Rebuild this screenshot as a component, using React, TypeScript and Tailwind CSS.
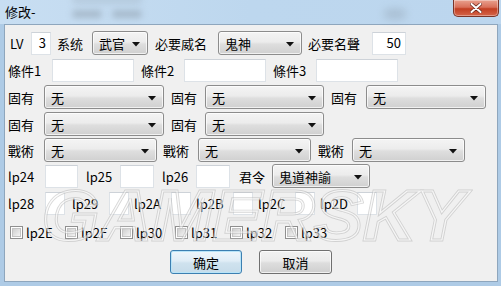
import React from "react";

const FONT = "font-['Noto_Sans_CJK_SC','Noto_Sans',sans-serif]";

function Label({ cls, children }: { cls: string; children: React.ReactNode }) {
  return <div className={`shrink-0 whitespace-nowrap leading-none ${cls}`}>{children}</div>;
}

function Input({ cls, value }: { cls: string; value?: string }) {
  return (
    <div
      className={`shrink-0 h-[23px] bg-white border border-[#dde2e7] border-t-[#cdd2d8] flex items-center justify-end pr-[4px] ${cls}`}
    >
      {value}
    </div>
  );
}

function Combo({ cls, text }: { cls: string; text: string }) {
  return (
    <div
      className={`shrink-0 relative h-[24px] rounded-[3px] border border-[#8c8c8c] bg-[linear-gradient(#f4f4f4,#ececec_45%,#dedede_55%,#d0d0d0)] shadow-[inset_0_0_0_1px_rgba(255,255,255,0.7)] flex items-center pl-[6px] ${cls}`}
    >
      <span className="leading-none">{text}</span>
      <svg className="absolute right-[7px] top-[10px]" width="8" height="5" viewBox="0 0 8 5">
        <path d="M0 0 H8 L4 4.5 Z" fill="#111" />
      </svg>
    </div>
  );
}

function Check({ label }: { label: string }) {
  return (
    <div className="shrink-0 w-[55px] flex items-center">
      <div className="w-[13px] h-[13px] border border-[#8f8f8f] bg-white p-[1px]">
        <div className="w-full h-full bg-[linear-gradient(135deg,#cfcfcf,#f4f4f4)] border border-[#c4c4c4]" />
      </div>
      <span className="ml-[3px] leading-none">{label}</span>
    </div>
  );
}

export default function App() {
  return (
    <div className={`relative w-[501px] h-[286px] overflow-hidden bg-[#aecbe6] text-[13px] text-black ${FONT}`}>
      {/* title bar */}
      <div className="relative h-[24px] flex items-start bg-[linear-gradient(90deg,#c8def2,#bdd7ee_50%,#bcd6ee)]">
        <div className="absolute left-[72px] top-[10px] w-[30px] h-[8px] rounded-full bg-[#8b9aa8] opacity-50 blur-[3px]" />
        <div className="absolute left-[112px] top-[10px] w-[30px] h-[8px] rounded-full bg-[#8b9aa8] opacity-50 blur-[3px]" />
        <div className="absolute left-[72px] top-[-4px] w-[70px] h-[8px] rounded-full bg-[#9fb0c0] opacity-40 blur-[3px]" />
        <div className="absolute left-[384px] top-[9px] w-[22px] h-[10px] rounded-full bg-[#8b9aa8] opacity-40 blur-[4px]" />
        <div className="relative ml-[5px] mt-[5px] leading-none text-[13px]">修改-</div>
        <div className="relative ml-auto mr-[2px] w-[46px] h-[17px] rounded-b-[5px] border border-t-0 border-[#7a3428] bg-[linear-gradient(#e9a18f,#d9705a_45%,#c23e22_55%,#d4654a)] flex items-center justify-center shadow-[inset_0_0_0_1px_rgba(255,255,255,0.35)]">
          <svg width="12" height="10" viewBox="0 0 12 10">
            <path d="M1 0.5 L11 9.5 M11 0.5 L1 9.5" stroke="#6b2a20" strokeWidth="3.4" strokeLinecap="round" />
            <path d="M1.5 1 L10.5 9 M10.5 1 L1.5 9" stroke="#ffffff" strokeWidth="2" strokeLinecap="round" />
          </svg>
        </div>
      </div>

      {/* content */}
      <div className="ml-[4px] w-[494px] h-[258px] bg-[#f0f0f0] border border-[#8ea6bd] flex flex-col">
        {/* row 1 */}
        <div className="mt-[6px] h-[24px] flex items-center">
          <Label cls="ml-[5px] w-[21px]">LV</Label>
          <Input cls="w-[20px]" value="3" />
          <Label cls="ml-[6px] w-[35px]">系统</Label>
          <Combo cls="w-[56px]" text="武官" />
          <Label cls="ml-[7px] w-[63px]">必要威名</Label>
          <Combo cls="w-[84px]" text="鬼神" />
          <Label cls="ml-[6px] w-[64px]">必要名聲</Label>
          <Input cls="w-[34px]" value="50" />
        </div>
        {/* row 2 */}
        <div className="mt-[3px] h-[24px] flex items-center">
          <Label cls="ml-[3px] w-[44px]">條件1</Label>
          <Input cls="w-[82px]" />
          <Label cls="ml-[7px] w-[43px]">條件2</Label>
          <Input cls="w-[82px]" />
          <Label cls="ml-[7px] w-[43px]">條件3</Label>
          <Input cls="w-[82px]" />
        </div>
        {/* row 3 */}
        <div className="mt-[3px] h-[24px] flex items-center">
          <Label cls="ml-[3px] w-[36px]">固有</Label>
          <Combo cls="w-[120px]" text="无" />
          <Label cls="ml-[7px] w-[34px]">固有</Label>
          <Combo cls="w-[119px]" text="无" />
          <Label cls="ml-[7px] w-[35px]">固有</Label>
          <Combo cls="w-[120px]" text="无" />
        </div>
        {/* row 4 */}
        <div className="mt-[3px] h-[24px] flex items-center">
          <Label cls="ml-[3px] w-[36px]">固有</Label>
          <Combo cls="w-[120px]" text="无" />
          <Label cls="ml-[7px] w-[34px]">固有</Label>
          <Combo cls="w-[119px]" text="无" />
        </div>
        {/* row 5 */}
        <div className="mt-[2px] h-[24px] flex items-center">
          <Label cls="ml-[3px] w-[36px]">戰術</Label>
          <Combo cls="w-[113px]" text="无" />
          <Label cls="ml-[6px] w-[35px]">戰術</Label>
          <Combo cls="w-[113px]" text="无" />
          <Label cls="ml-[7px] w-[34px]">戰術</Label>
          <Combo cls="w-[113px]" text="无" />
        </div>
        {/* row 6 */}
        <div className="mt-[2px] h-[24px] flex items-center">
          <Label cls="ml-[3px] w-[37px]">lp24</Label>
          <Input cls="w-[33px]" />
          <Label cls="ml-[8px] w-[34px]">lp25</Label>
          <Input cls="w-[34px]" />
          <Label cls="ml-[8px] w-[34px]">lp26</Label>
          <Input cls="w-[34px]" />
          <Label cls="ml-[9px] w-[33px]">君令</Label>
          <Combo cls="w-[98px]" text="鬼道神諭" />
        </div>
        {/* row 7 */}
        <div className="mt-[3px] h-[24px] flex items-center">
          <Label cls="ml-[3px] w-[37px]">lp28</Label>
          <Input cls="w-[20px]" />
          <Label cls="ml-[7px] w-[37px]">lp29</Label>
          <Input cls="w-[20px]" />
          <Label cls="ml-[5px] w-[37px]">lp2A</Label>
          <Input cls="w-[20px]" />
          <Label cls="ml-[5px] w-[37px]">lp2B</Label>
          <Input cls="w-[20px]" />
          <Label cls="ml-[5px] w-[37px]">lp2C</Label>
          <Input cls="w-[20px]" />
          <Label cls="ml-[5px] w-[37px]">lp2D</Label>
          <Input cls="w-[20px]" />
        </div>
        {/* row 8 */}
        <div className="mt-[9px] h-[16px] flex items-center pl-[5px]">
          <Check label="lp2E" />
          <Check label="lp2F" />
          <Check label="lp30" />
          <Check label="lp31" />
          <Check label="lp32" />
          <Check label="lp33" />
        </div>
        {/* row 9 */}
        <div className="mt-[10px] h-[24px] flex items-center">
          <button className="ml-[165px] w-[72px] h-[24px] rounded-[3px] border border-[#3c7fb1] bg-[linear-gradient(#eef6fb,#e0edf6_45%,#cfe2ee_55%,#c6dcea)] shadow-[inset_0_0_0_1px_#b8e4f8] flex items-center justify-center leading-none">
            确定
          </button>
          <button className="ml-[17px] w-[73px] h-[24px] rounded-[3px] border border-[#707070] bg-[linear-gradient(#f2f2f2,#ebebeb_45%,#dddddd_55%,#cfcfcf)] shadow-[inset_0_0_0_1px_rgba(255,255,255,0.7)] flex items-center justify-center leading-none">
            取消
          </button>
        </div>
      </div>

      {/* watermark (double outline) */}
      <div aria-hidden="true" className="pointer-events-none absolute left-[42px] top-[181px] origin-left scale-x-[1.045] opacity-60">
        <div className="relative text-[length:70px] font-bold italic leading-none whitespace-nowrap font-['Liberation_Sans',sans-serif] text-transparent [-webkit-text-stroke:3px_#bdbdbd]">
          GAMERSKY
          <div className="absolute inset-0 [-webkit-text-stroke:1.2px_#fafafa]">GAMERSKY</div>
        </div>
      </div>
    </div>
  );
}
